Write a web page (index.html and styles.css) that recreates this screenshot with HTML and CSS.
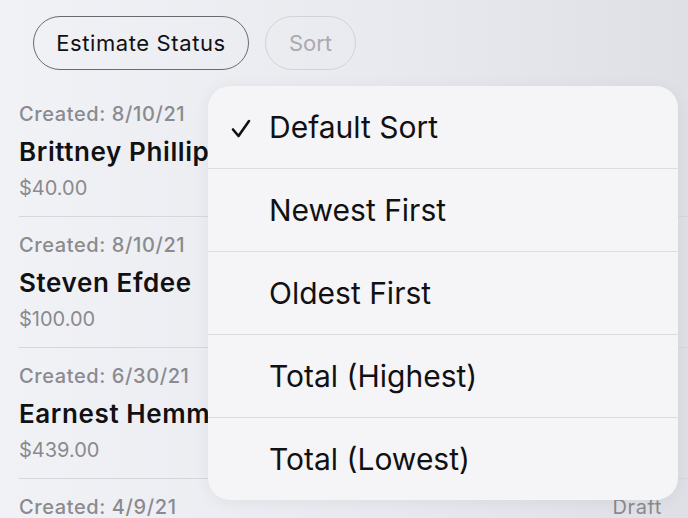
FILE: index.html
```html
<!DOCTYPE html>
<html lang="en">
    <head>
        <meta charset="UTF-8">
        <meta name="viewport" content="width=device-width, initial-scale=1.0">
        <title>Estimates</title>
        <link rel="stylesheet" href="styles.css">
    </head>
    <body>
        <div class="toolbar">
            <button class="pill pill-active">Estimate Status</button>
            <button class="pill pill-disabled">Sort</button>
        </div>

        <ul class="estimate-list">
            <li class="estimate">
                <div class="created">Created: 8/10/21</div>
                <div class="name">Brittney Phillips</div>
                <div class="price">$40.00</div>
            </li>
            <li class="estimate">
                <div class="created">Created: 8/10/21</div>
                <div class="name">Steven Efdee</div>
                <div class="price">$100.00</div>
            </li>
            <li class="estimate">
                <div class="created">Created: 6/30/21</div>
                <div class="name">Earnest Hemmings</div>
                <div class="price">$439.00</div>
            </li>
            <li class="estimate">
                <div class="created row-line">
                    <span>Created: 4/9/21</span>
                    <span class="status">Draft</span>
                </div>
            </li>
        </ul>

        <div class="sort-menu">
            <div class="menu-item">
                <svg class="check" width="20" height="20" viewBox="0 0 20 20">
                    <polyline points="2,10.5 7.5,17 18,2" fill="none" stroke="#111" stroke-width="2.6" stroke-linecap="round" stroke-linejoin="round"/>
                </svg>
                <span>Default Sort</span>
            </div>
            <div class="menu-item"><span>Newest First</span></div>
            <div class="menu-item"><span>Oldest First</span></div>
            <div class="menu-item"><span>Total (Highest)</span></div>
            <div class="menu-item"><span>Total (Lowest)</span></div>
        </div>
    </body>
</html>
```

FILE: styles.css
```css
:root {
    --text: #111113;
    --muted: #8a8a8f;
    --line: #d6d7dc;
}

body {
    margin: 0;
    height: 518px;
    overflow: hidden;
    font-family: Inter, "Noto Sans", sans-serif;
    color: var(--text);
    background: linear-gradient(to right, #f1f2f6 0%, #e9eaef 55%, #dfe0e5 100%);
    position: relative;
}

.toolbar {
    display: flex;
    gap: 16px;
    padding: 16px 0 0 33px;
    height: 54px;
}

.pill {
    height: 54px;
    border-radius: 27px;
    background: transparent;
    font-family: inherit;
    font-size: 22px;
    padding: 0;
}

.pill-active {
    border: 1.5px solid #6a6a6e;
    color: var(--text);
    width: 216px;
    letter-spacing: 0.6px;
}

.pill-disabled {
    border: 1.5px solid #d2d3d8;
    color: #a9aaae;
    width: 91px;
}

.estimate-list {
    list-style: none;
    margin: 16px 0 0;
    padding: 0;
}

.estimate {
    margin-left: 19px;
    padding: 16px 26px 16px 0;
    border-bottom: 1px solid var(--line);
}

.created {
    font-size: 20px;
    line-height: 24px;
    font-weight: 500;
    letter-spacing: 0.6px;
    color: var(--muted);
}

.row-line {
    display: flex;
    justify-content: space-between;
}

.status {
    font-weight: 400;
}

.name {
    margin-top: 10px;
    font-size: 26px;
    line-height: 32px;
    font-weight: 600;
    letter-spacing: 0.6px;
    white-space: nowrap;
}

.price {
    margin-top: 8px;
    font-size: 20px;
    line-height: 24px;
    color: var(--muted);
}

.sort-menu {
    position: absolute;
    top: 86px;
    left: 208px;
    width: 470px;
    background: #f5f5f8;
    border-radius: 22px;
    box-shadow: 0 2px 16px rgba(0, 0, 0, 0.06);
    overflow: hidden;
}

.menu-item {
    height: 82px;
    display: flex;
    align-items: center;
    padding-left: 61px;
    position: relative;
    font-size: 30px;
    border-top: 1px solid #dcdde1;
}

.menu-item:first-child {
    border-top: none;
}

.check {
    position: absolute;
    left: 23px;
    top: 33px;
}
```
